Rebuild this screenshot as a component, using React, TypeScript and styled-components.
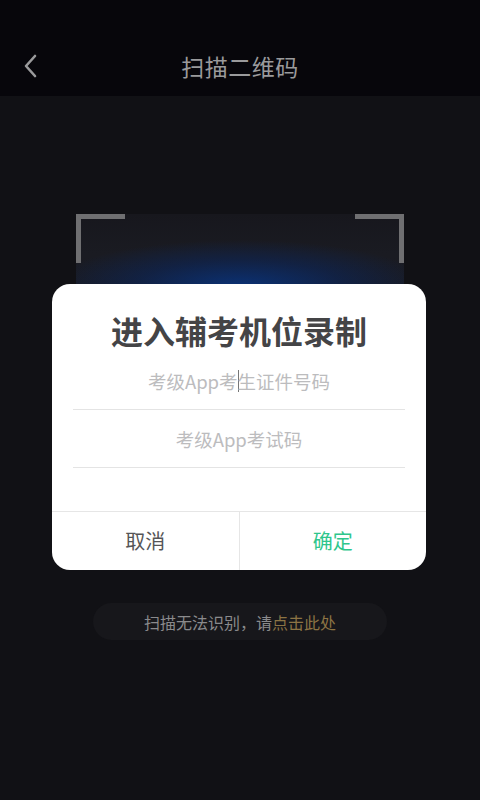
import React from 'react';
import styled, { createGlobalStyle } from 'styled-components';

const GlobalStyle = createGlobalStyle`
  html, body {
    margin: 0;
    padding: 0;
    background: #111115;
    font-family: "Noto Sans CJK SC", "Noto Sans", sans-serif;
  }
  * { box-sizing: border-box; }
`;

const Page = styled.div`
  position: relative;
  width: 480px;
  height: 800px;
  display: flex;
  flex-direction: column;
  background: #111115;
  overflow: hidden;
`;

const Header = styled.div`
  height: 96px;
  flex: none;
  display: flex;
  align-items: center;
  justify-content: center;
  position: relative;
  background: #07060b;
  padding-top: 36px;
`;

const BackButton = styled.button`
  position: absolute;
  left: 16px;
  top: 50px;
  width: 28px;
  height: 32px;
  border: 0;
  padding: 0;
  background: transparent;
  display: flex;
  align-items: center;
  justify-content: center;
`;

const HeaderTitle = styled.h1`
  margin: 0;
  font-size: 23px;
  font-weight: 400;
  color: #9a9a9c;
  letter-spacing: 0.5px;
`;

const Body = styled.div`
  flex: 1;
  display: flex;
  flex-direction: column;
  align-items: center;
  padding-top: 118px;
`;

const ScanFrame = styled.div`
  position: relative;
  width: 328px;
  height: 328px;
  background:
    radial-gradient(ellipse 190px 46px at 50% 72px, rgba(10, 50, 120, 0.95), rgba(10, 40, 100, 0.5) 55%, rgba(10, 30, 80, 0) 100%),
    linear-gradient(to bottom, #17171d 0px, #1a1b22 40px, #13141a 100%);
`;

const Corner = styled.span<{ $right?: boolean }>`
  position: absolute;
  top: 0;
  ${(p) => (p.$right ? 'right: 0;' : 'left: 0;')}
  width: 49px;
  height: 49px;
  border-top: 5px solid #6f6f71;
  ${(p) => (p.$right ? 'border-right' : 'border-left')}: 5px solid #6f6f71;
`;

const HintPill = styled.div`
  margin-top: 61px;
  width: 294px;
  height: 37px;
  border-radius: 19px;
  background: #17171b;
  display: flex;
  align-items: center;
  justify-content: center;
  font-size: 16px;
  color: #8a8a8c;
`;

const HintLink = styled.span`
  color: #8c7444;
`;

const Dialog = styled.div`
  position: absolute;
  left: 52px;
  top: 284px;
  width: 374px;
  height: 286px;
  background: #ffffff;
  border-radius: 18px;
  display: flex;
  flex-direction: column;
  overflow: hidden;
`;

const DialogTitle = styled.h2`
  margin: 0;
  padding-top: 26px;
  height: 78px;
  text-align: center;
  font-size: 32px;
  line-height: 40px;
  font-weight: 700;
  color: #444446;
`;

const Fields = styled.div`
  padding: 0 21px;
  display: flex;
  flex-direction: column;
`;

const Field = styled.div<{ $first?: boolean }>`
  height: 58px;
  border-bottom: 1.5px solid #e4e4e4;
  display: flex;
  align-items: center;
  justify-content: center;
  font-size: 18.5px;
  color: #bcbcbe;
  margin-top: ${(p) => (p.$first ? '-10px' : '0')};
`;

const Caret = styled.span`
  display: inline-block;
  width: 1px;
  height: 22px;
  background: #777;
  margin-right: -1px;
`;

const Actions = styled.div`
  margin-top: auto;
  height: 59px;
  display: flex;
  border-top: 1.5px solid #e6e6e6;
`;

const ActionButton = styled.button<{ $primary?: boolean }>`
  flex: 1;
  border: 0;
  background: transparent;
  font-family: inherit;
  font-size: 20px;
  color: ${(p) => (p.$primary ? '#2ec68c' : '#555557')};
  ${(p) => (p.$primary ? 'border-left: 1.5px solid #e6e6e6;' : '')}
  padding: 0 0 2px;
`;

export default function App() {
  return (
    <>
      <GlobalStyle />
      <Page>
        <Header>
          <BackButton aria-label="返回">
            <svg width="16" height="26" viewBox="0 0 16 26" fill="none">
              <path d="M13 3 L4 13 L13 23" stroke="#9a9a9c" strokeWidth="2.6" strokeLinecap="round" strokeLinejoin="round" />
            </svg>
          </BackButton>
          <HeaderTitle>扫描二维码</HeaderTitle>
        </Header>
        <Body>
          <ScanFrame>
            <Corner />
            <Corner $right />
          </ScanFrame>
          <HintPill>
            扫描无法识别，请<HintLink>点击此处</HintLink>
          </HintPill>
        </Body>
        <Dialog>
          <DialogTitle>进入辅考机位录制</DialogTitle>
          <Fields>
            <Field $first>
              考级App考<Caret />生证件号码
            </Field>
            <Field>考级App考试码</Field>
          </Fields>
          <Actions>
            <ActionButton>取消</ActionButton>
            <ActionButton $primary>确定</ActionButton>
          </Actions>
        </Dialog>
      </Page>
    </>
  );
}
